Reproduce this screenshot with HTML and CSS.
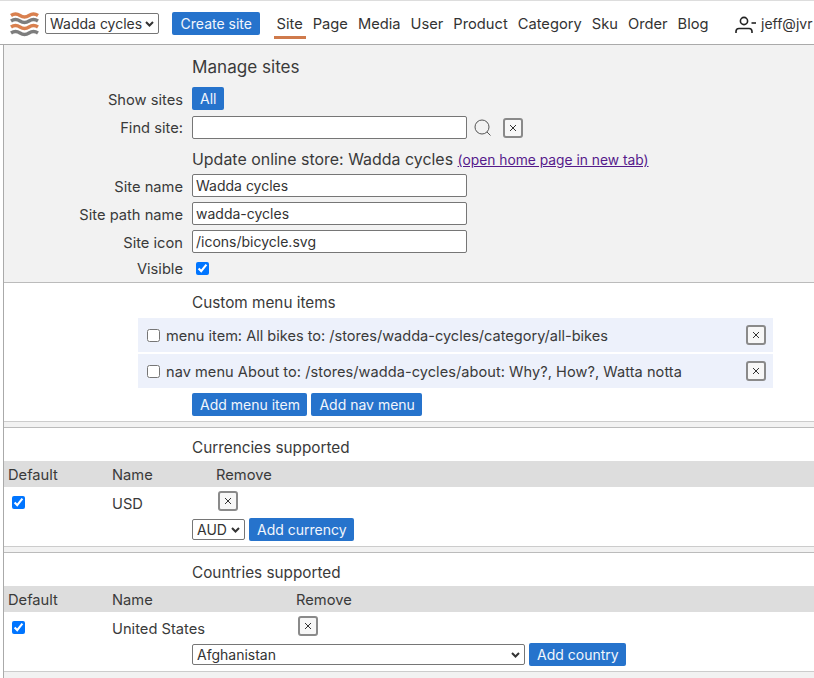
FILE: index.html
```html
<!DOCTYPE html>
<html lang="en">
<head>
<meta charset="utf-8">
<title>Manage sites</title>
<link rel="stylesheet" href="styles.css">
</head>
<body>
<header class="topbar">
  <svg class="logo" width="30" height="26" viewBox="0 0 30 26" fill="none" stroke-width="3.400">
    <path d="M1 3.500q4.500-3 9 0t9 0 9 0" stroke="#d9804f"/>
    <path d="M1 9q4.500-3 9 0t9 0 9 0" stroke="#7d7d7d"/>
    <path d="M1 15q4.500-3 9 0t9 0 9 0" stroke="#d9804f"/>
    <path d="M1 21q4.500-3 9 0t9 0 9 0" stroke="#7d7d7d"/>
  </svg>
  <span class="select-wrap site-select">
    <select class="field-select"><option>Wadda cycles</option></select>
    <svg class="chevron" width="9" height="6" viewBox="0 0 9 6" fill="none" stroke="#333" stroke-width="2"><path d="M1 1l3.500 3.500L8 1"/></svg>
  </span>
  <button class="btn create-btn">Create site</button>
  <nav class="nav">
    <a class="nav-link active">Site</a>
    <a class="nav-link">Page</a>
    <a class="nav-link">Media</a>
    <a class="nav-link">User</a>
    <a class="nav-link">Product</a>
    <a class="nav-link">Category</a>
    <a class="nav-link">Sku</a>
    <a class="nav-link">Order</a>
    <a class="nav-link">Blog</a>
  </nav>
  <div class="account">
    <svg width="22" height="18" viewBox="0 0 22 18" fill="none" stroke="#222" stroke-width="1.600">
      <circle cx="10" cy="6" r="3.600"/>
      <path d="M2 18v-1.500q0-3 3-3h10q3 0 3 3v1.500"/>
      <path d="M17.500 8h4.500"/>
    </svg>
    <span>jeff@jvr</span>
  </div>
</header>
<main class="page">
  <section class="panel grey">
    <div class="form-row title-row"><span class="label"></span><h2 class="heading">Manage sites</h2></div>
    <div class="form-row show-row"><span class="label">Show sites</span><button class="btn">All</button></div>
    <div class="form-row find-row">
      <span class="label">Find site:</span>
      <input class="input" type="text">
      <svg class="search" width="18" height="18" viewBox="0 0 18 18" fill="none" stroke="#555" stroke-width="1">
        <circle cx="8" cy="8" r="7"/><path d="M13 13l3.500 3.500"/>
      </svg>
      <button class="close-btn" aria-label="Clear"><svg width="8" height="8" viewBox="0 0 8 8" stroke="#333" stroke-width="1"><path d="M1 1l6 6M7 1l-6 6"/></svg></button>
    </div>
    <div class="form-row update-row"><span class="label"></span><h3 class="heading update-heading">Update online store: Wadda cycles <a class="home-link">(open home page in new tab)</a></h3></div>
    <div class="form-row field-row"><span class="label">Site name</span><input class="input" type="text" value="Wadda cycles"></div>
    <div class="form-row field-row"><span class="label">Site path name</span><input class="input" type="text" value="wadda-cycles"></div>
    <div class="form-row field-row"><span class="label">Site icon</span><input class="input" type="text" value="/icons/bicycle.svg"></div>
    <div class="form-row visible-row"><span class="label">Visible</span><input class="check visible-check" type="checkbox" checked></div>
  </section>

  <section class="panel menu-panel">
    <div class="form-row"><span class="label"></span><h3 class="heading">Custom menu items</h3></div>
    <div class="menu-list">
      <div class="menu-item">
        <input class="check" type="checkbox">
        <span class="menu-text">menu item: All bikes to: /stores/wadda-cycles/category/all-bikes</span>
        <button class="close-btn" aria-label="Remove"><svg width="8" height="8" viewBox="0 0 8 8" stroke="#333" stroke-width="1"><path d="M1 1l6 6M7 1l-6 6"/></svg></button>
      </div>
      <div class="menu-item">
        <input class="check" type="checkbox">
        <span class="menu-text menu-text-wide">nav menu About to: /stores/wadda-cycles/about: Why?, How?, Watta notta</span>
        <button class="close-btn" aria-label="Remove"><svg width="8" height="8" viewBox="0 0 8 8" stroke="#333" stroke-width="1"><path d="M1 1l6 6M7 1l-6 6"/></svg></button>
      </div>
    </div>
    <div class="form-row actions"><span class="label"></span><button class="btn">Add menu item</button><button class="btn">Add nav menu</button></div>
  </section>
  <div class="gap"></div>

  <section class="panel table-panel">
    <div class="form-row"><span class="label"></span><h3 class="heading">Currencies supported</h3></div>
    <div class="thead currency-cols"><span>Default</span><span>Name</span><span>Remove</span></div>
    <div class="trow currency-cols">
      <span class="cell-check"><input class="check" type="checkbox" checked></span>
      <span class="cell-name">USD</span>
      <span class="cell-remove"><button class="close-btn" aria-label="Remove"><svg width="8" height="8" viewBox="0 0 8 8" stroke="#333" stroke-width="1"><path d="M1 1l6 6M7 1l-6 6"/></svg></button></span>
    </div>
    <div class="form-row actions add-row"><span class="label"></span>
      <span class="select-wrap currency-select">
        <select class="field-select"><option>AUD</option></select>
        <svg class="chevron" width="9" height="6" viewBox="0 0 9 6" fill="none" stroke="#333" stroke-width="2"><path d="M1 1l3.500 3.500L8 1"/></svg>
      </span>
      <button class="btn">Add currency</button></div>
  </section>
  <div class="gap"></div>

  <section class="panel table-panel">
    <div class="form-row"><span class="label"></span><h3 class="heading">Countries supported</h3></div>
    <div class="thead country-cols"><span>Default</span><span>Name</span><span>Remove</span></div>
    <div class="trow country-cols">
      <span class="cell-check"><input class="check" type="checkbox" checked></span>
      <span class="cell-name">United States</span>
      <span class="cell-remove"><button class="close-btn" aria-label="Remove"><svg width="8" height="8" viewBox="0 0 8 8" stroke="#333" stroke-width="1"><path d="M1 1l6 6M7 1l-6 6"/></svg></button></span>
    </div>
    <div class="form-row actions add-row"><span class="label"></span>
      <span class="select-wrap country-select">
        <select class="field-select"><option>Afghanistan</option></select>
        <svg class="chevron" width="9" height="6" viewBox="0 0 9 6" fill="none" stroke="#333" stroke-width="2"><path d="M1 1l3.500 3.500L8 1"/></svg>
      </span>
      <button class="btn">Add country</button></div>
  </section>
  <div class="tail"></div>
</main>
</body>
</html>
```
FILE: styles.css
```css
* { box-sizing: border-box; }
html, body { margin: 0; height: 100%; overflow: hidden; }
body {
  font-family: Inter, "Liberation Sans", sans-serif;
  font-size: 14.7px;
  line-height: 20px;
  color: #3a3a3a;
  background: #fff;
  border-top: 1px solid #ddd;
}
button, input, select { font-family: inherit; font-size: 14px; color: #333; margin: 0; }

.btn {
  background: #2673cc;
  color: #f2f6fc;
  border: 0;
  border-radius: 2px;
  height: 23px;
  min-width: 32px;
  padding: 0 7.5px 0 8px;
  line-height: 23px;
  white-space: nowrap;
  flex: none;
}

.topbar {
  height: 44px;
  display: flex;
  align-items: flex-start;
  border-bottom: 1px solid #aaa;
  white-space: nowrap;
  overflow: hidden;
}
.logo { margin: 11px 0 0 10px; flex: none; }
.select-wrap { position: relative; display: block; flex: none; height: 21px; }
.site-select { margin: 12px 0 0 5px; width: 114px; }
.currency-select { width: 53px; }
.country-select { width: 333px; }
.chevron { position: absolute; right: 5px; top: 8px; pointer-events: none; }
.create-btn { margin: 11px 0 0 13px; min-width: 88px; }
.nav { display: flex; margin-left: 13.5px; gap: 4px; }
.nav-link {
  padding: 0 3px;
  height: 27px;
  margin-top: 11px;
  line-height: 24px;
  font-size: 14.7px;
  color: #333;
}
.nav-link.active { border-bottom: 3px solid #cf7a4c; }
.account { display: flex; align-items: center; gap: 5px; margin: 13px 0 0 22.5px; height: 20px; color: #333; font-size: 14px; flex: none; }

.page { margin-left: 3px; border-left: 1px solid #aaa; height: 633px; display: flex; flex-direction: column; overflow: hidden; }
.panel { border-bottom: 1px solid #ccc; }
.grey { background: #f2f2f2; padding-top: 12px; height: 238px; border-bottom: 1px solid #bbb; }

.form-row { display: flex; align-items: center; }
.label { width: 179px; text-align: right; margin-right: 9px; flex: none; padding-top: 2px; }
.find-row .label { padding-top: 0; }
.heading { margin: 0; font-size: 15.3px; font-weight: 400; line-height: 20px; }
.title-row .heading { font-size: 17.1px; }
.update-heading { font-size: 15.95px; }
.title-row { height: 20px; }
.show-row { margin-top: 10px; }
.find-row { margin-top: 6px; }
.update-row { margin-top: 11px; height: 20px; }
.field-row { margin-top: 5px; }
.update-row + .field-row { margin-top: 4px; }
.visible-row { margin-top: 5px; height: 20px; }
.home-link { color: #551a8b; text-decoration: underline; font-size: 13.8px; }

.input {
  width: 275px;
  height: 23px;
  border: 1px solid #767676;
  border-radius: 2px;
  background: #fff;
  padding: 0 3px;
}
.field-select {
  display: block;
  width: 100%;
  height: 21px;
  border: 1px solid #767676;
  border-radius: 2px;
  background: #fff;
  padding: 0 0 0 4px;
  appearance: none;
}
.search { margin-left: 7px; flex: none; }
.find-row .close-btn { margin-left: 11px; }
.close-btn {
  width: 20px;
  height: 20px;
  padding: 0;
  border: 2px solid #8a8a8a;
  border-radius: 3px;
  background: #f7f7f7;
  display: flex;
  align-items: center;
  justify-content: center;
  flex: none;
}
.check { width: 13px; height: 13px; margin: 0; flex: none; }
.visible-check { margin-left: 4px; }

.menu-panel { height: 139px; padding-top: 10px; border-bottom: 1px solid #ccc; }
.menu-list { margin: 5px 0 0 134px; width: 635px; display: flex; flex-direction: column; gap: 2px; }
.menu-item {
  height: 34px;
  background: #edf1fb;
  display: flex;
  align-items: center;
  padding: 0 7px 0 9px;
}
.menu-text { margin-left: 6px; flex: 1; font-size: 14.56px; padding-top: 1px; }
.menu-text-wide { letter-spacing: 0.06px; }
.actions { gap: 4px; margin-top: 5px; }
.actions .label { margin-right: 5px; }

.gap { height: 6px; background: #f2f2f2; border-bottom: 1px solid #bbb; flex: none; }

.table-panel { padding-top: 10px; height: 119px; flex: none; }
.thead {
  display: grid;
  height: 26px;
  margin-top: 3px;
  padding-top: 1px;
  background: #ddd;
  align-items: center;
  padding-left: 4px;
}
.currency-cols { grid-template-columns: 104px 104px 1fr; }
.country-cols { grid-template-columns: 104px 184px 1fr; }
.trow { display: grid; height: 31px; padding-left: 4px; align-items: flex-start; }
.cell-check { display: flex; padding: 9px 0 0 4px; }
.cell-name { padding-top: 7px; }
.cell-remove { display: flex; padding: 4px 0 0 2px; }
.add-row { margin-top: 0; }
.tail { flex: 1; background: #f2f2f2; }
```
